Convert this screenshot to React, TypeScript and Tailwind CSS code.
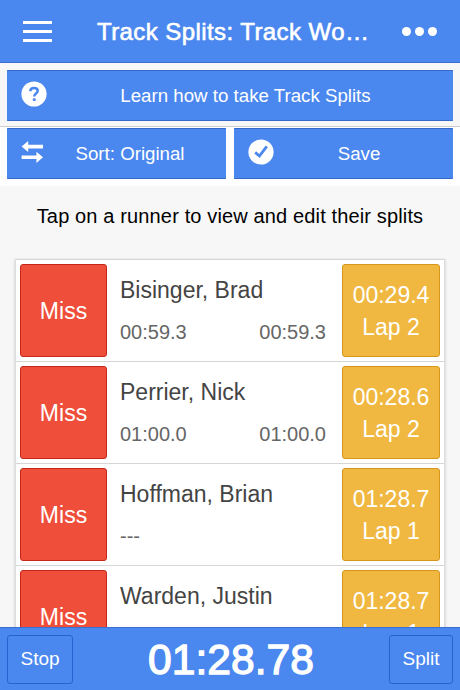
import React from 'react';

interface Runner {
  name: string;
  first?: string;
  total?: string;
  current: string;
  lap: number;
}

const runners: Runner[] = [
  { name: 'Bisinger, Brad', first: '00:59.3', total: '00:59.3', current: '00:29.4', lap: 2 },
  { name: 'Perrier, Nick', first: '01:00.0', total: '01:00.0', current: '00:28.6', lap: 2 },
  { name: 'Hoffman, Brian', current: '01:28.7', lap: 1 },
  { name: 'Warden, Justin', current: '01:28.7', lap: 1 },
];

const HelpIcon = () => (
  <svg width="26" height="26" viewBox="0 0 26 26" fill="none">
    <circle cx="13" cy="13" r="12.6" fill="#fff" />
    <path d="M9.3 10.2C9.4 7.8 10.9 6.9 13.1 6.9c2.2 0 3.6 1.1 3.6 2.9 0 2.7-3.5 2.8-3.5 5.7" stroke="#4a87ee" strokeWidth="2.5" />
    <rect x="11.8" y="17.2" width="2.9" height="2.9" rx="0.8" fill="#4a87ee" />
  </svg>
);

const SwapIcon = () => (
  <svg width="22" height="22" viewBox="0 0 22 22" fill="#fff">
    <path d="M0.6 5.5L7.2 0v3.7H22v3.7H7.2V11z" />
    <path d="M22 16.2L15.4 10.7v3.7H0.6v3.7h14.8v3.8z" />
  </svg>
);

const CheckIcon = () => (
  <svg width="26" height="26" viewBox="0 0 26 26" fill="none">
    <circle cx="13" cy="13" r="12.6" fill="#fff" />
    <path d="M7.2 13.4l4.2 3.6 7.4-9.6" stroke="#4a87ee" strokeWidth="2.8" />
  </svg>
);

const Header = () => (
  <header className="flex h-[63px] shrink-0 items-center border-b border-[#3a6fd0] bg-[#4a87ee] pt-px text-white">
    <button className="ml-[23px] flex w-[29px] flex-col gap-[6px]">
      <span className="h-[3px] w-full bg-white" />
      <span className="h-[3px] w-full bg-white" />
      <span className="h-[3px] w-full bg-white" />
    </button>
    <h1 className="ml-[45px] w-[280px] whitespace-nowrap text-[24px] leading-[30px] tracking-[0.42px] [-webkit-text-stroke:0.6px_white]">
      Track Splits: Track Wo…
    </h1>
    <button className="ml-auto mr-[23px] flex gap-[4px]">
      <span className="size-[9px] rounded-full bg-white" />
      <span className="size-[9px] rounded-full bg-white" />
      <span className="size-[9px] rounded-full bg-white" />
    </button>
  </header>
);

const ActionButton = ({ icon, label }: { icon: React.ReactNode; label: string }) => (
  <button className="grid h-full w-full grid-cols-[auto_1fr] items-center border border-[#3568c8] border-x-[#4a87ee] bg-[#4a87ee] pl-[13px] pr-[8px] text-[18.7px] text-white">
    <span className="-mt-[3px] flex">{icon}</span>
    <span className="whitespace-nowrap pt-px">{label}</span>
  </button>
);

const RunnerRow = ({ runner }: { runner: Runner }) => (
  <li className="flex h-[102px] items-start border-t border-[#d6d6d6] px-[4px] pt-[4px]">
    <button className="h-[93px] w-[87px] shrink-0 rounded-[3px] border border-[#c5281b] bg-[#ef4e3a] pt-[2px] text-[23px] text-white">
      Miss
    </button>
    <div className="flex-1 px-[13px] pt-[10px]">
      <h2 className="whitespace-nowrap text-[23px] leading-[32px] text-[#444]">{runner.name}</h2>
      <div className="mt-[12px] flex justify-between pr-[3px] text-[20px] leading-[28px] text-[#666]">
        <span>{runner.first ?? '---'}</span>
        <span>{runner.total}</span>
      </div>
    </div>
    <button className="h-[93px] w-[98px] shrink-0 rounded-[3px] border border-[#d6961a] bg-[#f0b840] pt-px text-[23px] leading-[32px] text-white">
      <span className="block">{runner.current}</span>
      <span className="block">Lap {runner.lap}</span>
    </button>
  </li>
);

const Footer = () => (
  <footer className="flex h-[63px] shrink-0 items-center justify-between border-t border-[#3a6fd0] bg-[#4a87ee] px-[7px] text-white">
    <button className="h-[49px] w-[66px] rounded-[3px] border border-[#2463d2] text-[19px]">Stop</button>
    <span className="text-[42.6px] leading-none [-webkit-text-stroke:1.3px_white]">01:28.78</span>
    <button className="h-[49px] w-[64px] rounded-[3px] border border-[#2463d2] text-[19px]">Split</button>
  </footer>
);

const App: React.FC = () => {
  return (
    <div className="flex h-[690px] w-[460px] flex-col overflow-hidden bg-[#f7f7f7] font-['Liberation_Sans',Arial,sans-serif]">
      <Header />

      {/* Help and toolbar buttons */}
      <div className="h-[64px] shrink-0 border-b border-[#ccc] px-[7px] pt-[7px]">
        <div className="h-[51px]">
          <ActionButton icon={<HelpIcon />} label="Learn how to take Track Splits" />
        </div>
      </div>
      <div className="flex h-[59px] shrink-0 gap-[8px] bg-white px-[7px] pt-px">
        <div className="h-[51px] flex-1">
          <ActionButton icon={<SwapIcon />} label="Sort: Original" />
        </div>
        <div className="h-[51px] flex-1">
          <ActionButton icon={<CheckIcon />} label="Save" />
        </div>
      </div>

      <main className="min-h-0 flex-1 overflow-hidden">
        <p className="pt-[15px] text-center text-[20px] leading-[30px] tracking-[0.14px] text-black">
          Tap on a runner to view and edit their splits
        </p>
        <ul className="mx-[15px] mt-[28px] border-x border-[#ddd] bg-white shadow-[0_1px_3px_rgba(0,0,0,0.2)]">
          {runners.map(runner => (
            <RunnerRow key={runner.name} runner={runner} />
          ))}
        </ul>
      </main>

      <Footer />
    </div>
  );
};

export default App;
